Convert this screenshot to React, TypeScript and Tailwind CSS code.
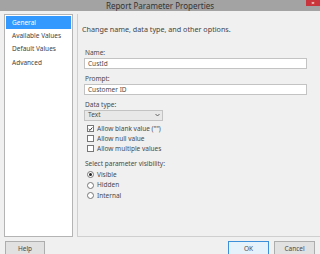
import React from 'react';

const navItems = ['General', 'Available Values', 'Default Values', 'Advanced'];

function Check({ checked }: { checked?: boolean }) {
  return (
    <span className="w-[7px] h-[7px] border border-[#777] bg-white flex items-center justify-center shrink-0">
      {checked && (
        <svg width="6" height="6" viewBox="0 0 6 6">
          <path d="M0.8 3.1 L2.4 4.7 L5.2 1.2" stroke="#222" strokeWidth="1.1" fill="none" />
        </svg>
      )}
    </span>
  );
}

function Radio({ checked }: { checked?: boolean }) {
  return (
    <span className="w-[7px] h-[7px] rounded-full border border-[#777] bg-white flex items-center justify-center shrink-0">
      {checked && <span className="w-[3px] h-[3px] rounded-full bg-[#222]" />}
    </span>
  );
}

export default function App() {
  return (
    <div
      className="w-[320px] h-[254px] bg-[#f0f0f0] flex flex-col overflow-hidden text-[#4a4a4a]"
      style={{ fontFamily: '"Noto Sans", "Open Sans", sans-serif' }}
    >
      {/* Title bar */}
      <div className="relative h-[11px] bg-[#a3a3a3] flex items-center justify-center shrink-0">
        <span className="text-[8px] leading-none text-[#333]">Report Parameter Properties</span>
        <div className="absolute right-0 top-0 w-[14px] h-[6px] bg-[#c8353d] flex items-center justify-center">
          <span className="text-white text-[6px] leading-none">×</span>
        </div>
      </div>

      <div className="flex pt-[3px] shrink-0">
        {/* Left nav */}
        <div className="ml-[4px] w-[69px] h-[223px] bg-white border border-[#b4b4b4] pt-[1px] px-[1px] shrink-0">
          {navItems.map((item, i) => (
            <div
              key={item}
              className={
                'h-[13.3px] flex items-center pl-[6px] text-[6.5px] ' +
                (i === 0 ? 'bg-[#3399ff] text-white' : 'text-[#444]')
              }
            >
              {item}
            </div>
          ))}
        </div>

        {/* Right panel */}
        <div className="ml-[4px] flex-1 h-[223px] border-l border-b border-[#cfcfcf] pl-[6px] pt-[9px]">
          <div className="text-[7.2px] leading-[12px] text-[#444] -ml-[2px]">
            Change name, data type, and other options.
          </div>

          <div className="mt-[12.5px] text-[6.5px] leading-[9px] pl-[1px]">Name:</div>
          <div className="mt-[1.5px] w-[223px] h-[11px] bg-white border border-[#c3c3c3] flex items-center pl-[3px] text-[6.5px]">
            CustId
          </div>

          <div className="mt-[4.5px] text-[6.5px] leading-[9px] pl-[1px]">Prompt:</div>
          <div className="mt-[1.5px] w-[223px] h-[11px] bg-white border border-[#c3c3c3] flex items-center pl-[3px] text-[6.5px]">
            Customer ID
          </div>

          <div className="mt-[4.5px] text-[6.5px] leading-[9px] pl-[1px]">Data type:</div>
          <div className="mt-[1px] w-[79px] h-[11px] bg-[#e8e8e8] border border-[#c3c3c3] flex items-center justify-between pl-[3px] pr-[2px] text-[6.5px]">
            <span>Text</span>
            <svg width="5" height="4" viewBox="0 0 5 4">
              <path d="M0.5 1 L2.5 3 L4.5 1" stroke="#555" strokeWidth="0.9" fill="none" />
            </svg>
          </div>

          <div className="mt-[3px] flex flex-col pl-[3px]">
            {[
              { label: 'Allow blank value ("")', checked: true },
              { label: 'Allow null value' },
              { label: 'Allow multiple values' },
            ].map((c) => (
              <div key={c.label} className="h-[10px] flex items-center gap-[3px] text-[6.5px]">
                <Check checked={c.checked} />
                <span>{c.label}</span>
              </div>
            ))}
          </div>

          <div className="mt-[5.5px] text-[6.5px] leading-[9px] pl-[1px]">Select parameter visibility:</div>
          <div className="mt-[1.5px] flex flex-col pl-[3px]">
            {[
              { label: 'Visible', checked: true },
              { label: 'Hidden' },
              { label: 'Internal' },
            ].map((r) => (
              <div key={r.label} className="h-[10.5px] flex items-center gap-[3px] text-[6.5px]">
                <Radio checked={r.checked} />
                <span>{r.label}</span>
              </div>
            ))}
          </div>
        </div>
      </div>

      {/* Buttons */}
      <div className="flex items-start pt-[4px] pl-[5px] pr-[5px]">
        <div className="w-[40px] h-[15px] bg-[#e1e1e1] border border-[#adadad] flex items-center justify-center text-[6.5px]">
          Help
        </div>
        <div className="flex-1" />
        <div className="w-[41px] h-[15px] bg-[#e5f1fb] border border-[#3c8fd8] flex items-center justify-center text-[6.5px]">
          OK
        </div>
        <div className="ml-[5px] w-[41px] h-[15px] bg-[#e1e1e1] border border-[#adadad] flex items-center justify-center text-[6.5px]">
          Cancel
        </div>
      </div>
    </div>
  );
}
